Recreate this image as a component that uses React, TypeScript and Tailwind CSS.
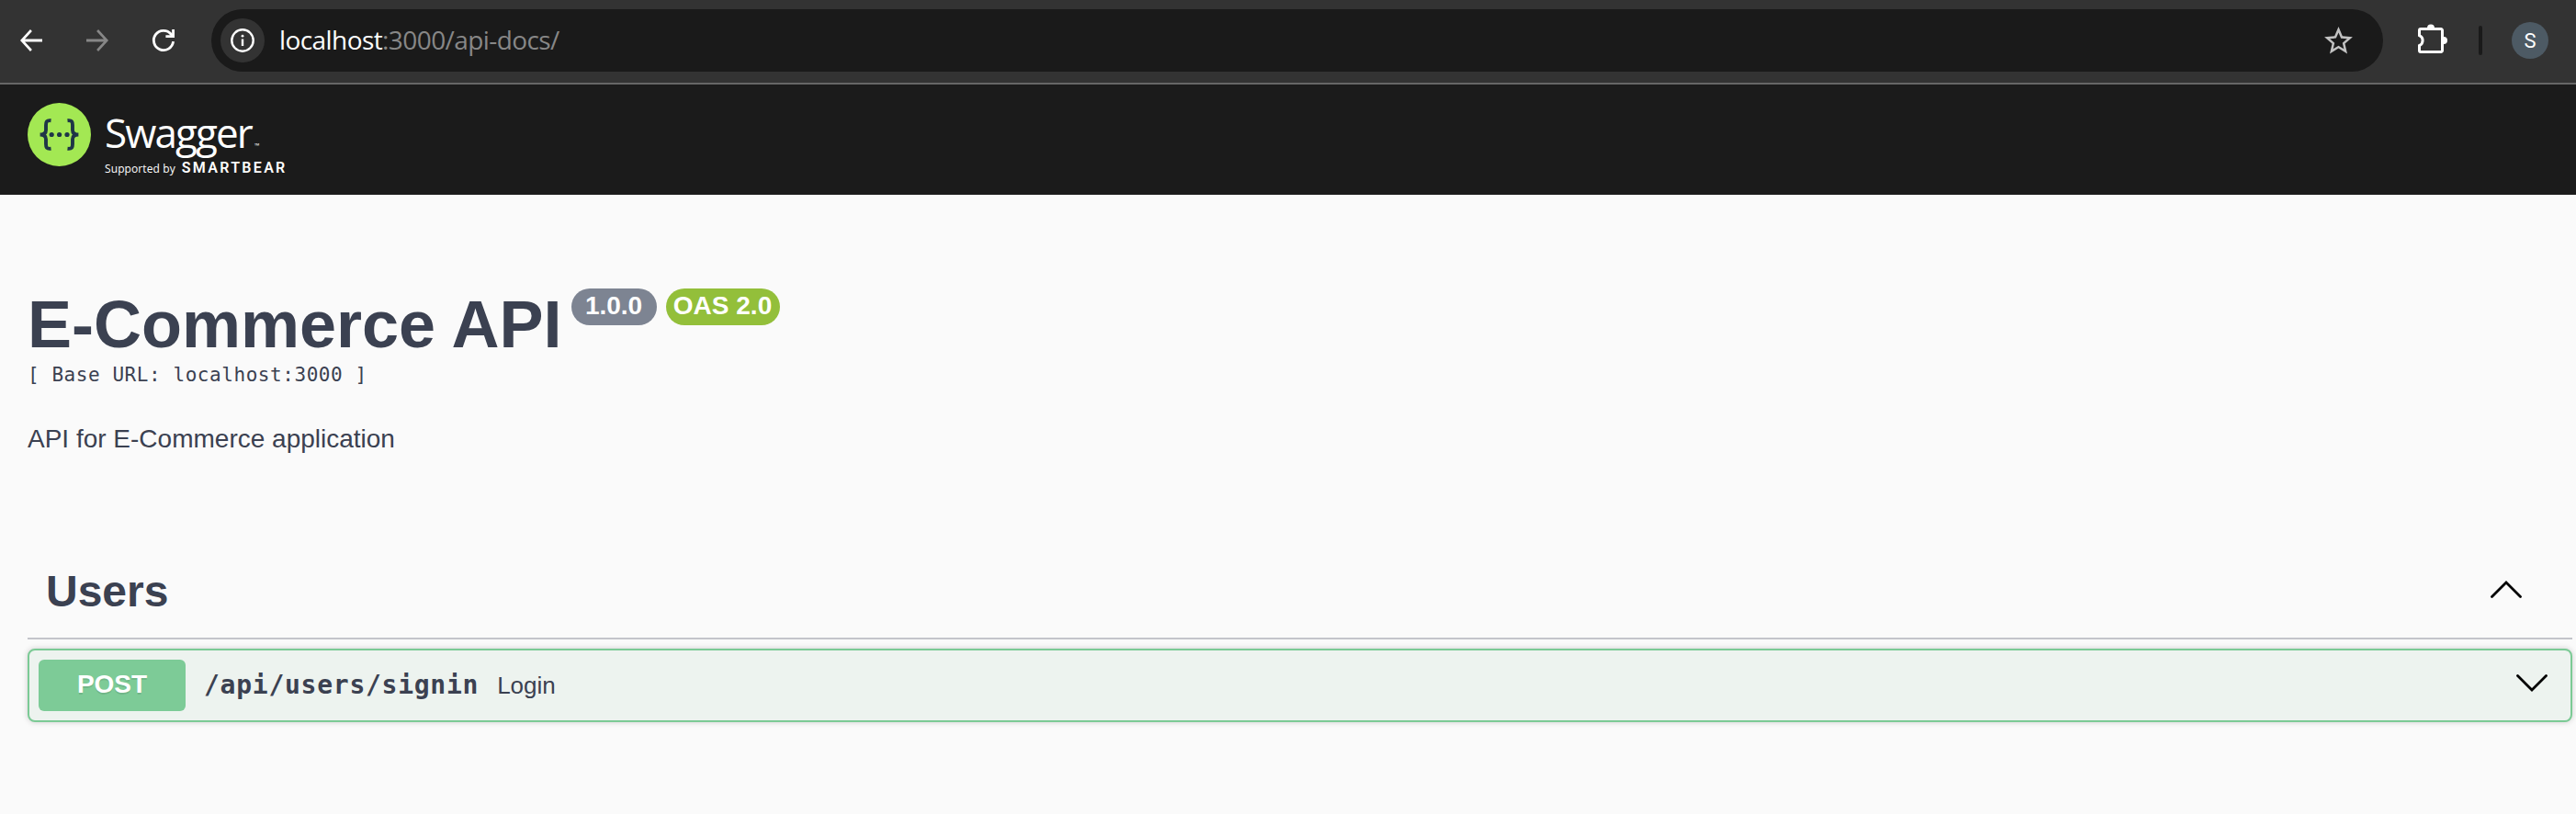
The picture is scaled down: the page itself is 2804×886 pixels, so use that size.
function BackIcon({ className }: { className: string }) {
  return (
    <svg viewBox="0 0 24 24" className={className} fill="currentColor">
      <path d="M7.35 12.95 12.6 18.6 11.3 20 4 12 11.3 4l1.3 1.4-5.25 5.65H20v1.9z" />
    </svg>
  );
}

function BrowserBar() {
  return (
    <div className="flex h-[92px] items-start border-b-2 border-[#666666] bg-[#333333]">
      <div className="flex h-[88px] flex-1 items-center">
        <BackIcon className="ml-4 size-9 text-white" />
        <BackIcon className="ml-9 size-9 rotate-180 text-[#878787]" />
        <svg viewBox="0 0 24 24" className="ml-9 size-9 text-white" fill="none" stroke="currentColor" strokeWidth="1.9">
          <path d="M19.05 12.8A7.1 7.1 0 1 1 17.5 7.5L18.8 8.9" />
          <path d="M19.05 4v5.05H13.6" />
        </svg>
        <div className="ml-[34px] flex h-[68px] w-[2364px] items-center rounded-full bg-[#1a1a1a] pl-[10px] pr-[30px]">
          <div className="flex size-12 items-center justify-center rounded-full bg-[#333333]">
            <svg viewBox="0 0 26 26" className="size-[26px]" fill="none" stroke="white" strokeWidth="2.4">
              <circle cx="13" cy="13" r="11.7" />
              <path d="M13 11.5V19" />
              <circle cx="13" cy="8.2" r="1.4" fill="white" stroke="none" />
            </svg>
          </div>
          <div className="ml-4 flex-1 whitespace-nowrap pb-[2px] font-['Open_Sans',sans-serif] text-[28px] leading-9 tracking-[-0.58px] text-[#878787]">
            <span className="text-white">localhost</span>:3000/api-docs/
          </div>
          <svg viewBox="0 0 24 24" className="size-[37px]" fill="#c2c2c2">
            <path d="m22 9.24-7.19-.62L12 2 9.19 8.63 2 9.24l5.46 4.73L5.82 21 12 17.27 18.18 21l-1.63-7.03L22 9.24zM12 15.4l-3.76 2.27 1-4.28-3.32-2.88 4.38-.38L12 6.1l1.71 4.04 4.38.38-3.32 2.88 1 4.28L12 15.4z" />
          </svg>
        </div>
        <svg viewBox="0 0 32 32" className="ml-[38px] mb-1 size-8">
          <path d="M3.5 5.5H25a1.5 1.5 0 0 1 1.5 1.5V29a1.5 1.5 0 0 1-1.5 1.5H3a1.5 1.5 0 0 1-1.5-1.5V23.5a6 6 0 0 0 0-11V7a1.5 1.5 0 0 1 1.5-1.5z" fill="none" stroke="white" strokeWidth="3" />
          <path d="M10 4.5a4 4 0 0 1 8 0zM28 14a4 4 0 0 1 0 8z" fill="white" />
        </svg>
        <div className="ml-[34px] h-8 w-1 rounded-full bg-[#1a1a1a]" />
        <div className="ml-8 flex size-10 items-center justify-center rounded-full bg-[#4d5a64] font-[Roboto,sans-serif] text-[22px] text-white">
          S
        </div>
      </div>
    </div>
  );
}

function SwaggerLogo() {
  return (
    <div className="flex items-start">
      <svg viewBox="0 0 69 69" className="mt-5 size-[69px]">
        <circle cx="34.5" cy="34.5" r="34.5" fill="#a3e853" />
        <g fill="none" stroke="#1f3647" strokeWidth="3.9">
          <path d="M25.5 19.2C20.5 18.6 20 20.8 20 24.2V29.4C20 32.6 17.6 34.5 13.6 34.5C17.6 34.5 20 36.4 20 39.6V44.8C20 48.2 20.5 50.4 25.5 49.8" />
          <path d="M43.5 19.2C48.5 18.6 49 20.8 49 24.2V29.4C49 32.6 51.4 34.5 55.4 34.5C51.4 34.5 49 36.4 49 39.6V44.8C49 48.2 48.5 50.4 43.5 49.8" />
        </g>
        <g fill="#1f3647">
          <circle cx="26.2" cy="34.5" r="2.6" />
          <circle cx="34.6" cy="34.5" r="2.6" />
          <circle cx="43" cy="34.5" r="2.6" />
        </g>
      </svg>
      <div className="ml-[15px] flex flex-col whitespace-nowrap font-['Open_Sans',sans-serif] text-white">
        <div className="mt-[22px] flex h-[59px] items-baseline leading-[60px]">
          <span className="w-[159px] text-[44px] tracking-[-1.9px]">Swagger</span>
          <span className="ml-1 text-[7px]">™</span>
        </div>
        <div className="flex h-5 items-baseline leading-5">
          <span className="text-[12px] tracking-[0.1px]">Supported by</span>
          <span className="ml-[7px] font-[Roboto,sans-serif] text-[16px] font-semibold tracking-[2.3px]">SMARTBEAR</span>
        </div>
      </div>
    </div>
  );
}

function Chevron({ className }: { className: string }) {
  return (
    <svg viewBox="0 0 34 19" className={className} fill="none" stroke="black" strokeWidth="2.8" strokeLinecap="round">
      <path d="M1.5 17.5 17 2 32.5 17.5" />
    </svg>
  );
}

export default function App() {
  return (
    <div className="h-[886px] w-[2804px] overflow-hidden bg-[#fafafa] font-['Liberation_Sans',sans-serif] text-[#3b4151]">
      <BrowserBar />
      <header className="h-[120px] bg-[#1b1b1b] pl-[30px]">
        <SwaggerLogo />
      </header>
      <main className="pl-[30px] pr-1">
        <div className="mt-[100px] flex h-[82px] items-start">
          <h1 className="mt-[1px] whitespace-nowrap text-[72px] font-bold leading-[80px]">E-Commerce API</h1>
          <div className="ml-[10px] mt-[2px] flex gap-[10px] text-[28px] font-bold leading-[38px] text-white">
            <span className="h-10 w-[93px] rounded-full bg-[#7d8492] text-center">1.0.0</span>
            <span className="h-10 w-[124px] rounded-full bg-[#93bf3a] text-center">OAS 2.0</span>
          </div>
        </div>
        <pre className="h-7 font-['DejaVu_Sans_Mono',monospace] text-[21px] leading-7 tracking-[0.56px]">[ Base URL: localhost:3000 ]</pre>
        <p className="mt-10 h-8 text-[28px] leading-8">API for E-Commerce application</p>
        <section>
          <div className="mt-[122px] flex h-[80px] items-start justify-between border-b-2 border-[#c3c4ca] pl-5 pr-[55px]">
            <h2 className="text-[48px] font-bold leading-[56px]">Users</h2>
            <Chevron className="mt-4 h-[19px] w-[34px]" />
          </div>
          <div className="mt-[10px] flex h-20 items-center rounded-lg border-2 border-[#7bca95] bg-[#edf3ef] pl-[10px] pr-[25px] shadow-[0_0_6px_rgba(0,0,0,0.19)]">
            <div className="h-14 w-40 rounded-md bg-[#7dcb97] text-center text-[28px] font-bold leading-[54px] text-white [text-shadow:0_2px_0_rgba(0,0,0,0.1)]">
              POST
            </div>
            <span className="ml-5 whitespace-nowrap font-['DejaVu_Sans_Mono',monospace] text-[28px] font-bold leading-8 tracking-[0.74px]">/api/users/signin</span>
            <span className="ml-5 flex-1 text-[26px] leading-8">Login</span>
            <Chevron className="mb-[6px] h-[19px] w-[34px] rotate-180" />
          </div>
        </section>
      </main>
    </div>
  );
}
